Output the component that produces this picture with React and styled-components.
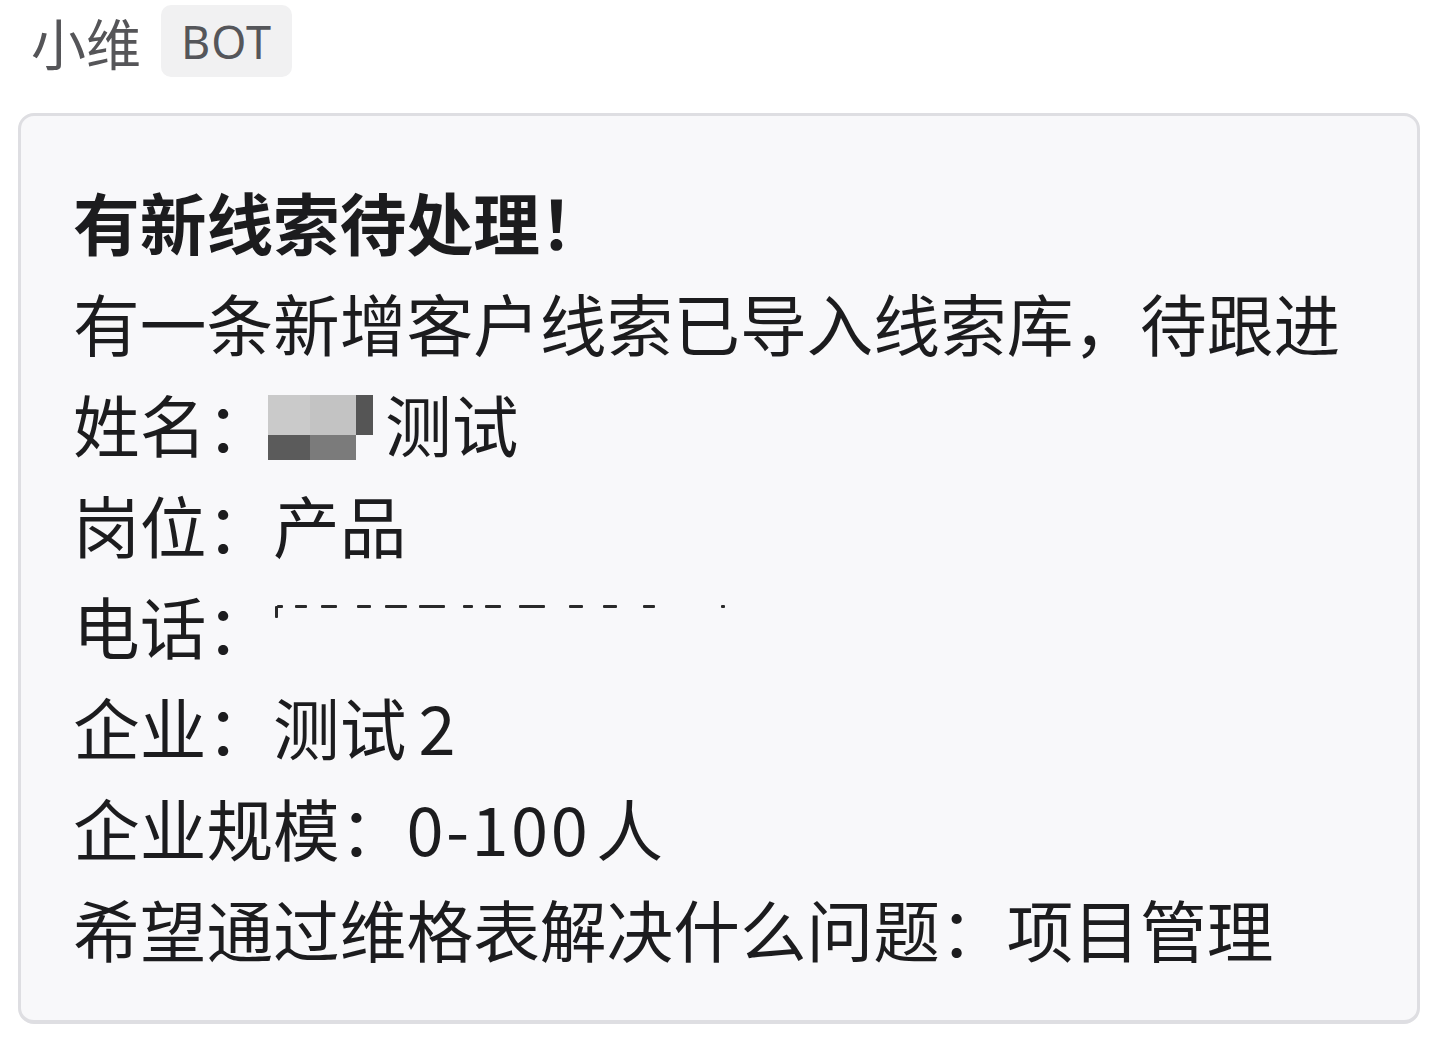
import React from 'react'
import styled, { createGlobalStyle } from 'styled-components'

const Global = createGlobalStyle`
  html, body {
    margin: 0;
    padding: 0;
    background: #ffffff;
  }
  body {
    font-family: "Noto Sans CJK SC", "Noto Sans", sans-serif;
  }
`

const Page = styled.div`
  width: 1440px;
  height: 1046px;
  overflow: hidden;
  padding: 4px 0 0 18px;
  box-sizing: border-box;
`

const Header = styled.div`
  display: flex;
  align-items: center;
  gap: 20px;
  padding-left: 13px;
  height: 74px;
`

const Sender = styled.span`
  font-size: 55px;
  color: #555558;
  line-height: 1;
`

const Tag = styled.span`
  display: inline-flex;
  align-items: center;
  justify-content: center;
  height: 72px;
  padding: 0 20px;
  border-radius: 10px;
  background: #f1f1f2;
  color: #55565a;
  font-size: 45px;
  font-family: "Noto Sans", "Noto Sans CJK SC", sans-serif;
  letter-spacing: 1px;
`

const Card = styled.div`
  margin-top: 35px;
  width: 1402px;
  height: 911px;
  box-sizing: border-box;
  border: 3px solid #dedee2;
  border-bottom-width: 4px;
  border-radius: 16px;
  background: #f8f8fa;
  padding: 55px 52px 0;
`

const Line = styled.div`
  display: flex;
  align-items: center;
  height: 101px;
  font-size: 66.7px;
  line-height: 101px;
  color: #1c1c1e;
  font-weight: ${p => (p.$bold ? 700 : 400)};
  white-space: nowrap;
`

const Num = styled.span`
  letter-spacing: 2.5px;
`

const Gap = styled.span`
  display: inline-block;
  width: ${p => p.$w}px;
`

const Mosaic = styled.span`
  display: inline-grid;
  grid-template-columns: 42px 46px 17px;
  grid-template-rows: 40px 25px;
  margin: 8px 12px 0 -5px;
  align-self: center;
`

const Pix = styled.span`
  background: ${p => p.$c};
`

const Dashes = styled.span`
  position: relative;
  display: inline-block;
  width: 452px;
  height: 101px;
`

const Dash = styled.span`
  position: absolute;
  top: 30px;
  height: 3px;
  background: #2a2a2a;
  border-radius: 1px;
`

const dashes = [
  [4, 6], [22, 12], [48, 16], [84, 14], [112, 22], [146, 26], [190, 10],
  [212, 16], [246, 26], [296, 14], [330, 14], [370, 12], [448, 4],
]

export default function App() {
  return (
    <Page>
      <Global />
      <Header>
        <Sender>小维</Sender>
        <Tag>BOT</Tag>
      </Header>
      <Card>
        <Line $bold>有新线索待处理！</Line>
        <Line>有一条新增客户线索已导入线索库，待跟进</Line>
        <Line>
          姓名：
          <Mosaic>
            <Pix $c="#cacaca" />
            <Pix $c="#c3c3c3" />
            <Pix $c="#555" />
            <Pix $c="#5b5b5b" />
            <Pix $c="#7b7b7b" />
            <Pix $c="transparent" />
          </Mosaic>
          测试
        </Line>
        <Line>岗位：产品</Line>
        <Line>
          电话：
          <Dashes>
            <Dash style={{ left: 2, width: 3, height: 12, top: 31 }} />
            {dashes.map(([l, w]) => (
              <Dash key={l} style={{ left: l, width: w }} />
            ))}
          </Dashes>
        </Line>
        <Line>
          企业：测试<Gap $w={12} />2
        </Line>
        <Line>
          企业规模：<Num>0-100</Num><Gap $w={6} />人
        </Line>
        <Line>希望通过维格表解决什么问题：项目管理</Line>
      </Card>
    </Page>
  )
}
